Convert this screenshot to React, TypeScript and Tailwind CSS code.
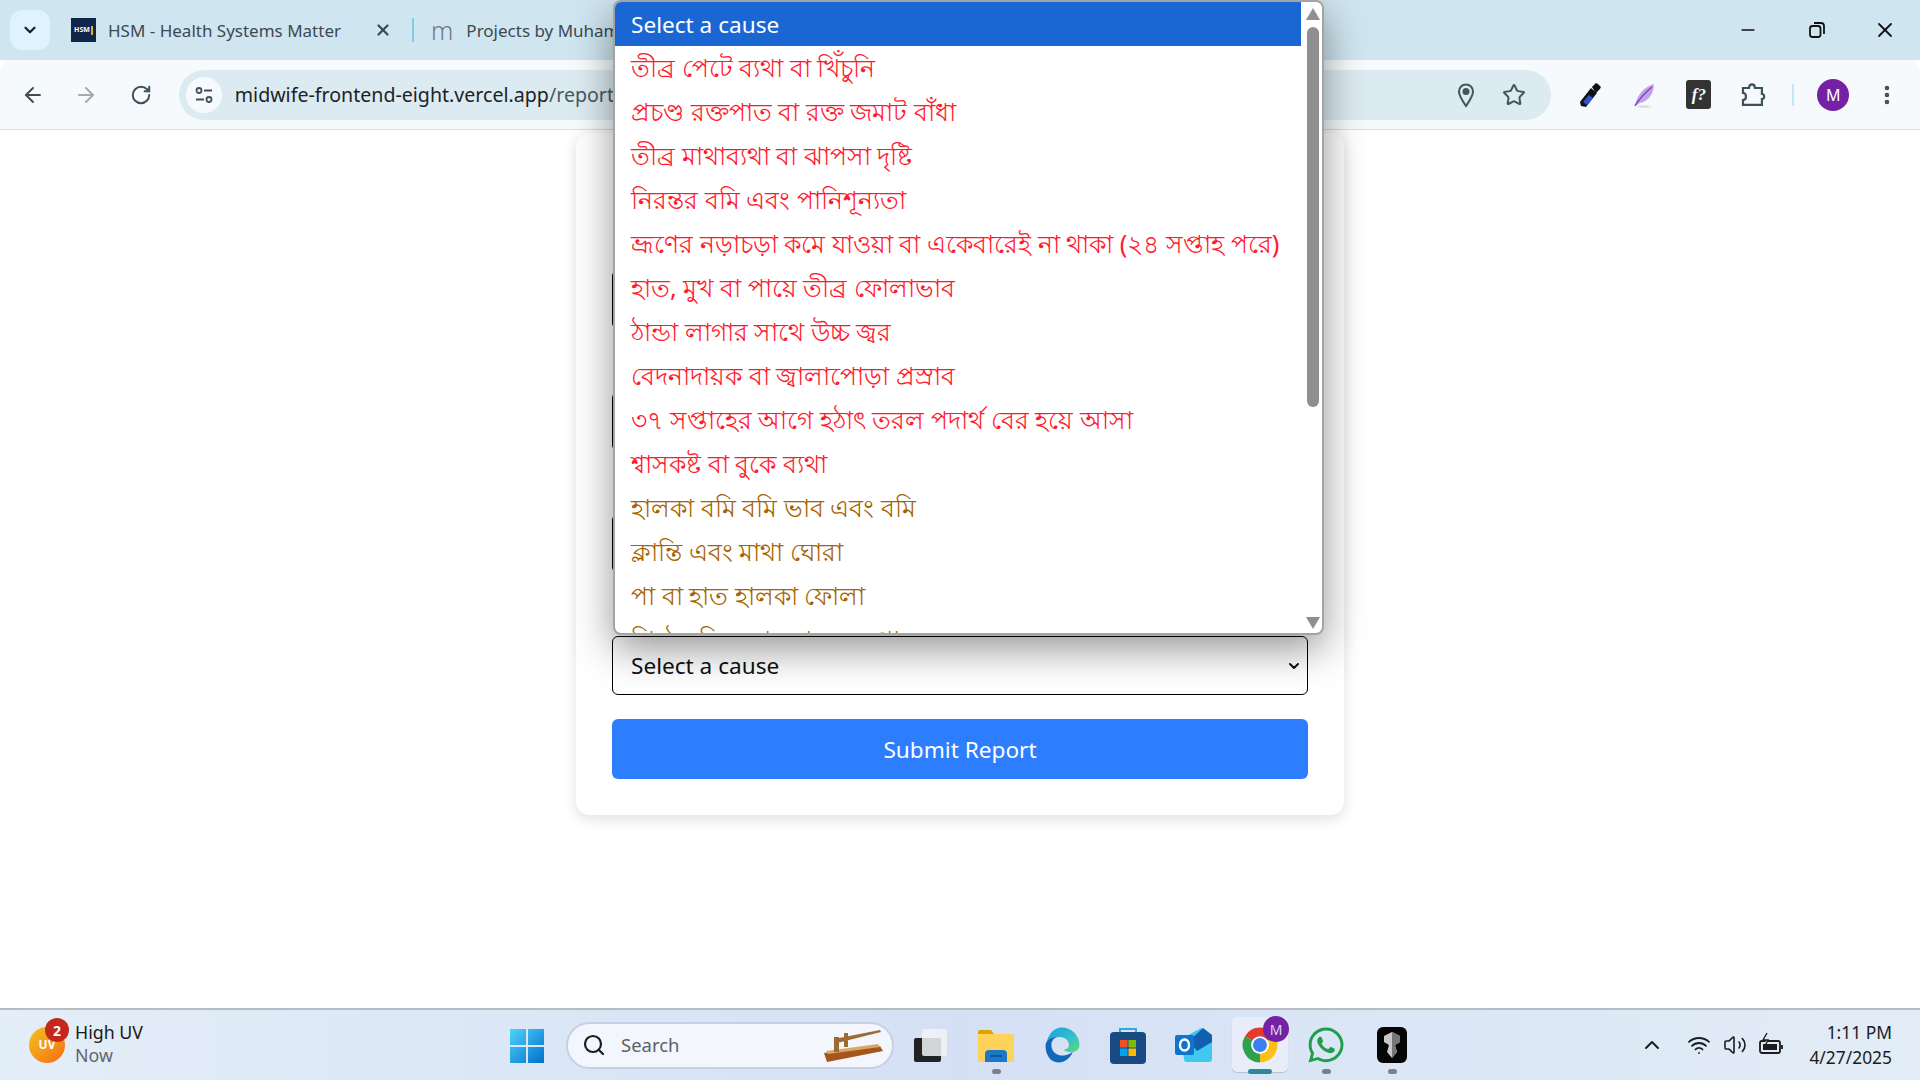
import { ArrowLeft, ArrowRight, ChevronDown, ChevronUp, EllipsisVertical, Minus, RotateCw, Search, Star, Volume2, Wifi, X } from "lucide-react";
import { FaWhatsapp } from "react-icons/fa";

const causes = [
  { label: "তীব্র পেটে ব্যথা বা খিঁচুনি", tone: "text-[#ff1a2e]" },
  { label: "প্রচণ্ড রক্তপাত বা রক্ত জমাট বাঁধা", tone: "text-[#ff1a2e]" },
  { label: "তীব্র মাথাব্যথা বা ঝাপসা দৃষ্টি", tone: "text-[#ff1a2e]" },
  { label: "নিরন্তর বমি এবং পানিশূন্যতা", tone: "text-[#ff1a2e]" },
  { label: "ভ্রূণের নড়াচড়া কমে যাওয়া বা একেবারেই না থাকা (২৪ সপ্তাহ পরে)", tone: "text-[#ff1a2e]" },
  { label: "হাত, মুখ বা পায়ে তীব্র ফোলাভাব", tone: "text-[#ff1a2e]" },
  { label: "ঠান্ডা লাগার সাথে উচ্চ জ্বর", tone: "text-[#ff1a2e]" },
  { label: "বেদনাদায়ক বা জ্বালাপোড়া প্রস্রাব", tone: "text-[#ff1a2e]" },
  { label: "৩৭ সপ্তাহের আগে হঠাৎ তরল পদার্থ বের হয়ে আসা", tone: "text-[#ff1a2e]" },
  { label: "শ্বাসকষ্ট বা বুকে ব্যথা", tone: "text-[#ff1a2e]" },
  { label: "হালকা বমি বমি ভাব এবং বমি", tone: "text-[#a66300]" },
  { label: "ক্লান্তি এবং মাথা ঘোরা", tone: "text-[#a66300]" },
  { label: "পা বা হাত হালকা ফোলা", tone: "text-[#a66300]" },
  { label: "পিঠের নিচে বা কোমরে ব্যথা", tone: "text-[#a66300]" },
];

function ChromeLogo({ size = 38 }: { size?: number }) {
  return (
    <svg width={size} height={size} viewBox="0 0 24 24">
      <path d="M12 12L2.470 6.500A11 11 0 0 1 21.530 6.500Z" fill="#e33b2e" />
      <path d="M12 12L21.530 6.500A11 11 0 0 1 12 23Z" fill="#fbc116" />
      <path d="M12 12L12 23A11 11 0 0 1 2.470 6.500Z" fill="#2fa04c" />
      <circle cx="12" cy="12" r="5.600" fill="#fff" />
      <circle cx="12" cy="12" r="4.400" fill="#3a80f0" />
    </svg>
  );
}

function EdgeLogo() {
  return (
    <svg width="38" height="38" viewBox="0 0 24 24">
      <defs>
        <linearGradient id="edgeTop" x1="0" y1="0" x2="1" y2="1">
          <stop offset="0" stopColor="#1b9de2" />
          <stop offset="0.6" stopColor="#35c1c9" />
          <stop offset="1" stopColor="#63dc6a" />
        </linearGradient>
      </defs>
      <path d="M12 1a11 11 0 0 1 11 11c0 3-2.600 4.600-5.400 4.600-2 0-3.600-.6-4.600-1.600 2.200-.2 3.400-1.400 3.400-3 0-3-2.800-5-6-5-4 0-7.400 2.400-8.400 5.500C2.600 6 6.500 1 12 1z" fill="url(#edgeTop)" />
      <path d="M1.600 12.500c0-3 3.400-5.500 7-5.500-3 1.500-3.800 4-3 7 .9 3.400 4.600 5.200 8.400 4.400 1.800-.4 3.400-1 4.800-2-1.600 3.800-5 6.600-9 6.600-5.400 0-8.200-5-8.200-10.500z" fill="#0f69b8" />
    </svg>
  );
}

function TaskIcon({ dot, children }: { dot?: boolean; children: React.ReactNode }) {
  return (
    <div className="relative flex h-full w-[66px] items-center justify-center">
      {children}
      {dot && <span className="absolute bottom-[6px] h-[5px] w-[9px] rounded-full bg-[#7c8088]" />}
    </div>
  );
}

export default function App() {
  return (
    <div className="relative flex h-screen w-full flex-col overflow-hidden bg-white font-['Noto_Sans',sans-serif] text-[#1f2a30]">
      {/* tab strip */}
      <div className="flex h-[60px] items-center bg-[#cfe5ef] pl-[10px]">
        <div className="flex h-[40px] w-[40px] items-center justify-center rounded-xl bg-[#dff3fc]">
          <ChevronDown size={18} strokeWidth={3} className="text-[#18242c]" />
        </div>
        <div className="ml-[21px] flex h-[24px] w-[25px] items-center justify-center gap-px bg-[#10254a] text-[7px] font-bold text-white">
          HSM<span className="h-[9px] w-[2px] bg-[#e8a92c]" />
        </div>
        <span className="ml-[12px] w-[236px] whitespace-nowrap pt-[2px] text-[17px] text-[#3c4a52]">HSM - Health Systems Matter</span>
        <X size={18} strokeWidth={3} className="ml-[30px] text-[#3c4a52]" />
        <div className="ml-[20px] h-[24px] w-[2px] bg-[#7fcde9]" />
        <span className="ml-[17px] text-[25px] leading-none font-light text-[#70797e]">m</span>
        <span className="ml-[13px] whitespace-nowrap pt-[2px] text-[17px] text-[#3c4a52]">Projects by Muhammad</span>
        <div className="ml-auto flex items-center pr-[23px] text-[#111]">
          <Minus size={20} strokeWidth={2} />
          <svg width="18" height="18" viewBox="0 0 18 18" fill="none" stroke="#111" strokeWidth="1.800" className="ml-[50px]">
            <rect x="2" y="5" width="10.500" height="11" rx="2.500" />
            <path d="M6 2h7a3 3 0 0 1 3 3v8" />
          </svg>
          <X size={24} strokeWidth={1.800} className="ml-[47px]" />
        </div>
      </div>

      {/* toolbar */}
      <div className="flex h-[70px] items-center rounded-t-[12px] border-b border-[#d6dfe4] bg-[#f6fafd] pl-[21px] pr-[21px]">
        <ArrowLeft size={24} strokeWidth={2} className="text-[#3e5058]" />
        <ArrowRight size={24} strokeWidth={2} className="ml-[29px] text-[#a3abaf]" />
        <RotateCw size={22} strokeWidth={2.200} className="ml-[32px] text-[#3e5058]" />
        <div className="ml-[27px] flex h-[50px] w-[1376px] items-center rounded-full bg-[#dcebf1] pl-[7px] pr-[25px]">
          <div className="flex h-[36px] w-[36px] items-center justify-center rounded-full bg-[#f6fafd]">
            <svg width="20" height="20" viewBox="0 0 20 20" fill="none" stroke="#3e5058" strokeWidth="1.800">
              <circle cx="5" cy="5.500" r="2.500" />
              <path d="M10 5.500h8M2 14.500h8" />
              <circle cx="15" cy="14.500" r="2.500" />
            </svg>
          </div>
          <span className="ml-[13px] whitespace-nowrap text-[19.600px] text-[#1b2327]">
            midwife-frontend-eight.vercel.app<span className="text-[#4b575e]">/report</span>
          </span>
          <div className="ml-auto flex items-center gap-[24px] text-[#46555c]">
            <svg width="24" height="26" viewBox="0 0 24 26" fill="none" stroke="#46555c" strokeWidth="2">
              <path d="M12 24C8 18 5 14 5 9.500a7 7 0 0 1 14 0C19 14 16 18 12 24z" />
              <circle cx="12" cy="9.500" r="2.500" fill="#46555c" />
            </svg>
            <Star size={24} strokeWidth={2} />
          </div>
        </div>
        <svg width="26" height="28" viewBox="0 0 26 28" className="ml-[27px]">
          <path d="M3 25l-1-4L13 7l6 5L8 26z" fill="#111" />
          <path d="M5 21l6-7 4 3-6 7z" fill="#3255c8" />
          <path d="M14 6l4-4 2 1 3 3-1 2-4 4z" fill="#111" />
        </svg>
        <svg width="28" height="28" viewBox="0 0 28 28" className="ml-[28px]">
          <path d="M4 25C6 14 13 6 23 3c0 8-4 17-14 19z" fill="#c4a2e8" />
          <path d="M4 25C8 18 14 12 21 6" stroke="#7f42c4" strokeWidth="1.500" fill="none" />
          <path d="M5 26c5-2 11-2 16 0-5 1-11 1-16 0z" fill="#d9d9d9" />
        </svg>
        <div className="ml-[27px] flex h-[29px] w-[25px] items-center justify-center rounded-[3px] bg-[#333] font-['Liberation_Serif',serif] text-[17px] leading-none font-bold text-white italic">f?</div>
        <svg width="28" height="28" viewBox="0 0 28 28" fill="none" stroke="#3e5058" strokeWidth="2.200" className="ml-[28px]">
          <path d="M4 7h6c0-5 6-5 6 0h7v6c3 0 3 5 0 5v6H4v-5c4 0 4-7 0-7z" />
        </svg>
        <div className="ml-[25px] h-[22px] w-[2px] bg-[#bfe8f8]" />
        <div className="ml-[23px] flex h-[32px] w-[32px] items-center justify-center rounded-full bg-[#7421a3] text-[16px] text-white">M</div>
        <EllipsisVertical size={24} strokeWidth={2.600} className="ml-[26px] text-[#3e5058]" />
      </div>

      {/* page */}
      <main className="min-h-0 flex-1 bg-white">
        <div className="mx-auto mt-[3px] flex h-[682px] w-[768px] flex-col rounded-[14px] bg-white px-[36px] pt-[137px] shadow-[0_4px_14px_rgba(0,0,0,0.13)]">
          <div className="h-[59px] rounded-md border border-black" />
          <div className="mt-[63px] h-[59px] rounded-md border border-black" />
          <div className="mt-[63px] h-[59px] rounded-md border border-black" />
          <div className="mt-[63px] flex h-[59px] items-center justify-between rounded-md border border-black pl-[18px] pr-[5px] text-[22.600px] text-[#111]">
            <span className="pt-[1px]">Select a cause</span>
            <ChevronDown size={16} strokeWidth={3} />
          </div>
          <div className="mt-[24px] flex h-[60px] items-center justify-center rounded-md bg-[#2d7dff] pt-[2px] text-[22.600px] text-white">Submit Report</div>
        </div>
      </main>

      {/* taskbar */}
      <div className="flex h-[72px] items-center border-t-2 border-[#b8bcc2] bg-gradient-to-r from-[#e3eef8] via-[#d5e0f5] to-[#e2edf7]">
        <div className="flex w-[494px] items-center pl-[29px]">
          <div className="relative flex h-[36px] w-[36px] items-center justify-center rounded-full bg-gradient-to-br from-[#f2c21f] to-[#f26b12] text-[12px] font-bold text-white">
            UV
            <span className="absolute -top-[9px] right-[-4px] flex h-[24px] w-[24px] items-center justify-center rounded-full bg-[#c4281c] text-[14px]">2</span>
          </div>
          <div className="ml-[10px] -mt-[2px] flex flex-col text-[17.800px] leading-[23px]">
            <span className="text-[#1a1a1a]">High UV</span>
            <span className="text-[#60666c]">Now</span>
          </div>
        </div>
        <TaskIcon>
          <svg width="36" height="36" viewBox="0 0 36 36">
            <defs>
              <linearGradient id="winTile" x1="0" y1="0" x2="1" y2="1">
                <stop offset="0" stopColor="#4fd2fb" />
                <stop offset="1" stopColor="#0070cc" />
              </linearGradient>
            </defs>
            <path d="M1 2h16v16H1zM19 2h16v16H19zM1 20h16v16H1zM19 20h16v16H19z" fill="url(#winTile)" />
          </svg>
        </TaskIcon>
        <div className="ml-[6px] flex h-[47px] w-[328px] items-center rounded-full border-2 border-[#c6d0e4] bg-[#f3f6fd] pl-[14px] pr-[8px]">
          <Search size={24} strokeWidth={2.200} className="text-[#1c1c1c]" />
          <span className="ml-[15px] text-[18.500px] text-[#5d6268]">Search</span>
          <svg width="62" height="36" viewBox="0 0 62 36" className="ml-auto">
            <path d="M2 26l56-7 3 5-56 11z" fill="#a5561d" />
            <path d="M4 24l52-7 2 3-52 7z" fill="#d9a766" />
            <path d="M12 12l46-9 1 2-44 11zM12 10h5v15h-5zM22 6h4v14h-4z" fill="#9c6a32" />
          </svg>
        </div>
        <div className="ml-[3px] flex h-full items-center">
          <TaskIcon>
            <svg width="36" height="36" viewBox="0 0 36 36">
              <rect x="2" y="11" width="27" height="24" rx="2" fill="#222" />
              <rect x="10" y="2" width="25" height="27" rx="2" fill="#f1f3f6" fillOpacity="0.85" />
            </svg>
          </TaskIcon>
          <TaskIcon dot>
            <svg width="38" height="38" viewBox="0 0 38 38">
              <path d="M1 6a2 2 0 0 1 2-2h11l3 4H1z" fill="#dfa200" />
              <path d="M1 8h36v28H1z" fill="#fdd35b" />
              <path d="M8 36V28a4 4 0 0 1 4-4h14a4 4 0 0 1 4 4v8z" fill="#1d78c9" />
              <path d="M13 30h12" stroke="#0f4d8a" strokeWidth="1.500" />
            </svg>
          </TaskIcon>
          <TaskIcon><EdgeLogo /></TaskIcon>
          <TaskIcon>
            <svg width="36" height="38" viewBox="0 0 36 38">
              <path d="M10 7V3h16v4" fill="none" stroke="#2fa8e0" strokeWidth="2" />
              <rect x="0" y="6" width="36" height="32" rx="4" fill="#1a4a82" />
              <path d="M10 14h7.500v7.500H10z" fill="#f25022" />
              <path d="M18.500 14H26v7.500h-7.500z" fill="#7fba00" />
              <path d="M10 22.500h7.500V30H10z" fill="#00a4ef" />
              <path d="M18.500 22.500H26V30h-7.500z" fill="#ffb900" />
            </svg>
          </TaskIcon>
          <TaskIcon>
            <svg width="38" height="36" viewBox="0 0 38 36">
              <path d="M6 12L26 1l11 7v24a3 3 0 0 1-3 3H12a3 3 0 0 1-3-3z" fill="#3fc8f0" />
              <path d="M14 14L28 1l9 7v7L22 24z" fill="#1160b0" />
              <rect x="0" y="8" width="19" height="20" rx="2" fill="#0f74cc" />
              <ellipse cx="9.500" cy="18" rx="4.500" ry="5.500" fill="none" stroke="#fff" strokeWidth="2.400" />
            </svg>
          </TaskIcon>
          <div className="relative flex h-full w-[66px] items-center justify-center">
            <div className="absolute top-[7px] h-[55px] w-[56px] rounded-[5px] bg-[#e8edf9] shadow-[0_1px_1px_rgba(0,0,0,0.15)]" />
            <div className="relative"><ChromeLogo /></div>
            <span className="absolute right-[4px] top-[6px] flex h-[26px] w-[26px] items-center justify-center rounded-full bg-[#7421a3] text-[14px] text-[#e6cfee]">M</span>
            <span className="absolute bottom-[6px] h-[5px] w-[24px] rounded-full bg-[#2a8a9c]" />
          </div>
          <TaskIcon dot><FaWhatsapp size={40} className="text-[#1f9e4d]" /></TaskIcon>
          <TaskIcon dot>
            <svg width="30" height="36" viewBox="0 0 30 36">
              <rect width="30" height="36" rx="6" fill="#060606" />
              <path d="M7 9l8-4 8 4v6l-5 3 2 7-5 6-5-6 2-7-5-3z" fill="#c8c8c8" />
              <path d="M15 5l8 4v6l-5 3 2 7-5 6z" fill="#777" />
            </svg>
          </TaskIcon>
        </div>
        <div className="ml-auto flex items-center pr-[28px]">
          <ChevronUp size={24} strokeWidth={2} className="text-[#1c1c1c]" />
          <Wifi size={24} strokeWidth={1.800} className="ml-[23px] text-[#1c1c1c]" />
          <Volume2 size={24} strokeWidth={1.600} className="ml-[12px] text-[#1c1c1c]" />
          <svg width="26" height="26" viewBox="0 0 26 26" fill="none" stroke="#1c1c1c" strokeWidth="1.800" className="ml-[11px]">
            <rect x="2" y="9" width="20" height="12" rx="2" />
            <rect x="5" y="12" width="14" height="6" fill="#1c1c1c" stroke="none" />
            <path d="M24 13v4" />
            <path d="M9 1L5 8h5L7 14" stroke="#1c1c1c" fill="#e6eef8" strokeWidth="1.400" />
          </svg>
          <div className="ml-[25px] flex flex-col items-end text-[17.400px] leading-[25px] text-[#1c1c1c]">
            <span>1:11 PM</span>
            <span>4/27/2025</span>
          </div>
        </div>
      </div>

      {/* native dropdown popup, sits over the form */}
      <div className="absolute left-[613px] top-0 flex h-[635px] w-[711px] overflow-hidden rounded-[8px] border-2 border-[#a4a4a4] bg-white shadow-[0_14px_40px_rgba(0,0,0,0.42)]">
        <div className="flex w-[686px] flex-col">
          <div className="h-[44px] shrink-0 bg-[#1a67d4] pl-[16px] text-[22.600px] leading-[45px] text-white">Select a cause</div>
          {causes.map((cause) => (
            <div key={cause.label} className={`h-[44px] shrink-0 whitespace-nowrap pl-[16px] text-[25.400px] leading-[42px] ${cause.tone}`}>
              {cause.label}
            </div>
          ))}
        </div>
        <div className="flex flex-1 flex-col items-center pt-[5px] pb-[3px] pl-[2px]">
          <svg width="16" height="14" viewBox="0 0 16 14"><path d="M8 1l7 12H1z" fill="#8f8f8f" /></svg>
          <div className="mt-[6px] h-[380px] w-[12px] rounded-full bg-[#8f8f8f]" />
          <svg width="16" height="14" viewBox="0 0 16 14" className="mt-auto"><path d="M8 13L1 1h14z" fill="#8f8f8f" /></svg>
        </div>
      </div>
    </div>
  );
}
